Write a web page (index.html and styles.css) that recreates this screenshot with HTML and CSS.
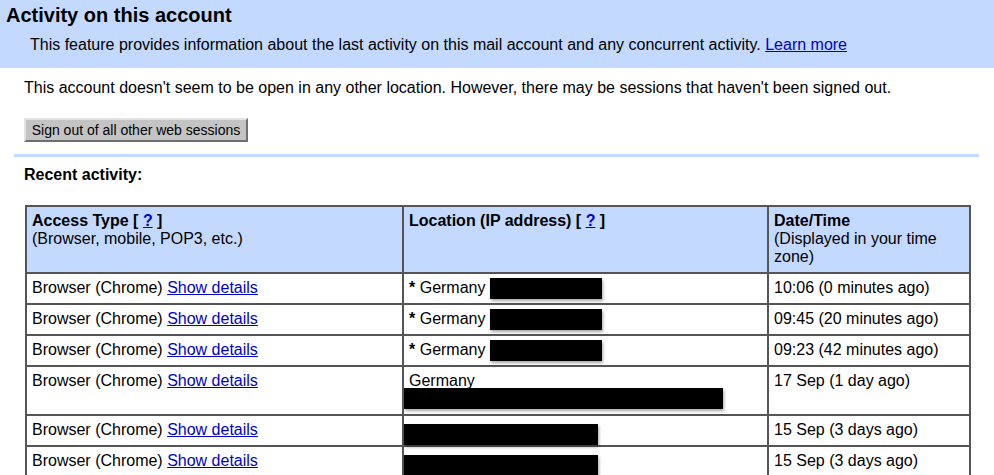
FILE: index.html
```html
<!DOCTYPE html>
<html lang="en">
<head>
  <meta charset="UTF-8" />
  <title>Activity on this account</title>
  <link rel="stylesheet" href="styles.css">
</head>
<body>
  <!-- Blue banner -->
  <div class="banner">
    <h1>Activity on this account</h1>
    <p>This feature provides information about the last activity on this mail account and any concurrent activity. <a href="#">Learn more</a></p>
  </div>

  <div class="content">
    <p class="status">This account doesn't seem to be open in any other location. However, there may be sessions that haven't been signed out.</p>
    <button class="signout" type="button">Sign out of all other web sessions</button>
    <div class="rule"></div>
    <h2>Recent activity:</h2>

    <table class="activity">
      <colgroup>
        <col class="col-type">
        <col class="col-loc">
        <col class="col-date">
      </colgroup>
      <tr class="head">
        <th><b>Access Type [ <a href="#">?</a> ]</b><br>(Browser, mobile, POP3, etc.)</th>
        <th><b>Location (IP address) [ <a href="#">?</a> ]</b></th>
        <th><b>Date/Time</b><br>(Displayed in your time zone)</th>
      </tr>
      <tr>
        <td>Browser (Chrome) <a href="#">Show details</a></td>
        <td><b>*</b> Germany <span class="redact short"></span></td>
        <td>10:06 (0 minutes ago)</td>
      </tr>
      <tr>
        <td>Browser (Chrome) <a href="#">Show details</a></td>
        <td><b>*</b> Germany <span class="redact short"></span></td>
        <td>09:45 (20 minutes ago)</td>
      </tr>
      <tr>
        <td>Browser (Chrome) <a href="#">Show details</a></td>
        <td><b>*</b> Germany <span class="redact short"></span></td>
        <td>09:23 (42 minutes ago)</td>
      </tr>
      <tr>
        <td>Browser (Chrome) <a href="#">Show details</a></td>
        <td>Germany<span class="redact wide"></span></td>
        <td>17 Sep (1 day ago)</td>
      </tr>
      <tr>
        <td>Browser (Chrome) <a href="#">Show details</a></td>
        <td><span class="redact ip"></span></td>
        <td>15 Sep (3 days ago)</td>
      </tr>
      <tr>
        <td>Browser (Chrome) <a href="#">Show details</a></td>
        <td><span class="redact ip"></span></td>
        <td>15 Sep (3 days ago)</td>
      </tr>
    </table>
  </div>
</body>
</html>
```

FILE: styles.css
```css
/* Base */
body {
  margin: 0;
  font-family: "Liberation Sans", Arial, sans-serif;
  font-size: 16px;
  color: #000;
  background: #fff;
}
a {
  color: #0000cc;
}

/* Banner */
.banner {
  background-color: #c3d9ff;
  padding: 4px 6px 14px;
}
.banner h1 {
  margin: 0;
  font-size: 20px;
  line-height: 23px;
}
.banner p {
  margin: 9px 0 0 24px;
  line-height: 18px;
}

/* Main content */
.content {
  padding: 0 15px 0 14px;
}
.status {
  margin: 11px 0 0 10px;
  line-height: 18px;
}
.signout {
  display: block;
  margin: 21px 0 0 10px;
  width: 224px;
  height: 24px;
  padding: 0;
  font-family: "Liberation Sans", Arial, sans-serif;
  font-size: 14px;
  color: #000;
  background-color: #c4c4c4;
  border: 2px solid;
  border-color: #e2e2e2 #6f6f6f #6f6f6f #e2e2e2;
}
.rule {
  margin-top: 12px;
  height: 3px;
  background-color: #c3d9ff;
}
.content h2 {
  margin: 9px 0 0 10px;
  font-size: 16px;
  line-height: 18px;
}

/* Activity table */
.activity {
  margin: 21px 0 0 11px;
  width: 944px;
  border-collapse: collapse;
  table-layout: fixed;
  border: 2px solid #555;
}
.col-type { width: 377px; }
.col-loc { width: 365px; }
.col-date { width: 202px; }
.activity th,
.activity td {
  border: 2px solid #555;
  padding: 5px 5px 6px;
  text-align: left;
  vertical-align: top;
  font-weight: normal;
  line-height: 18px;
}
.activity .head th {
  background-color: #c3d9ff;
  padding-bottom: 6px;
}

/* Redacted IP boxes */
.redact {
  display: inline-block;
  background: #000;
  box-shadow: 1px 2px 3px rgba(0, 0, 0, 0.35);
  vertical-align: top;
  height: 21px;
  margin: -1px 0 -2px;
}
.redact.short {
  width: 112px;
}
.redact.wide {
  display: block;
  width: 319px;
  margin: -2px 0 -1px -5px;
}
.redact.ip {
  width: 194px;
  margin: 3px 0 -6px -5px;
}
```
